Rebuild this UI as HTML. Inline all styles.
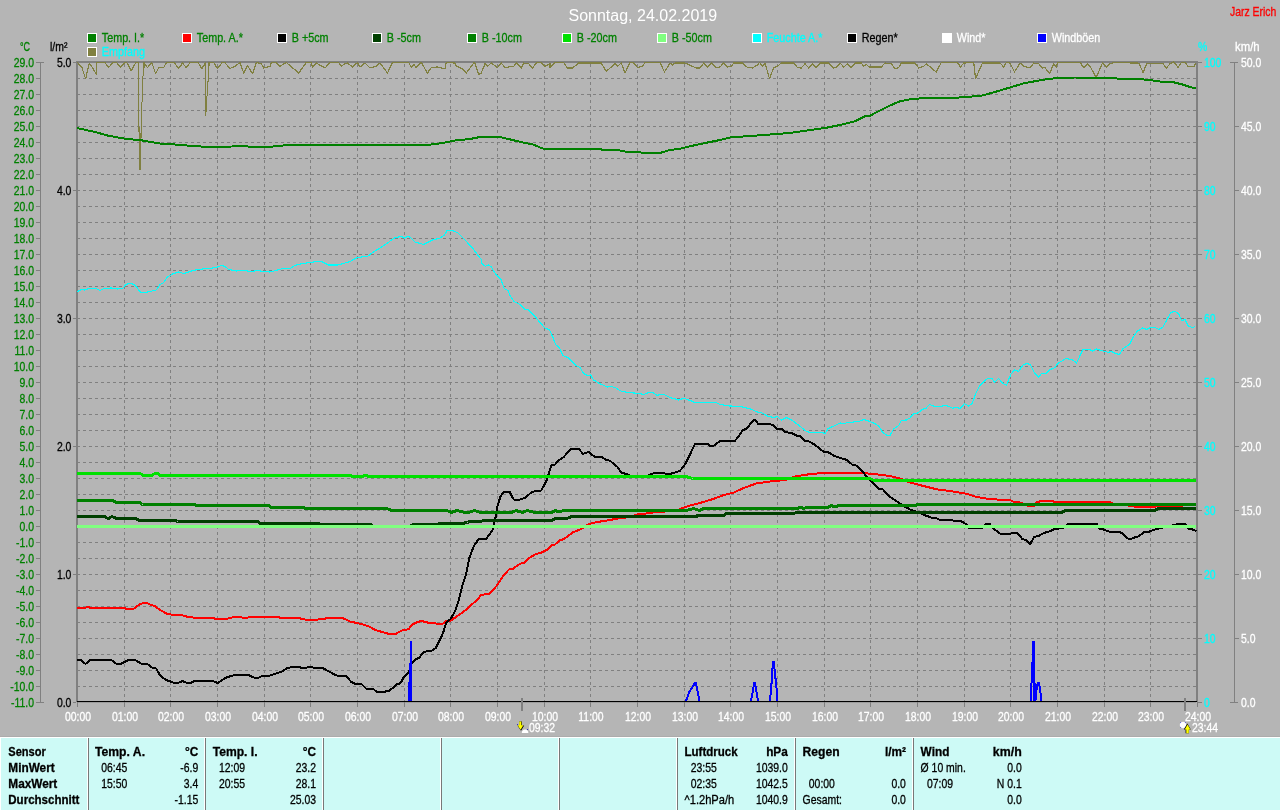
<!DOCTYPE html>
<html><head><meta charset="utf-8"><title>Wetter</title>
<style>html,body{margin:0;padding:0;background:#b5b5b5;overflow:hidden}svg{display:block;will-change:transform}text{font-family:"Liberation Sans",sans-serif}</style>
</head><body>
<svg width="1280" height="810" viewBox="0 0 1280 810">
<rect width="1280" height="810" fill="#b5b5b5"/>
<g stroke="#808080" stroke-width="1" stroke-dasharray="3 3" shape-rendering="crispEdges" fill="none">
<path d="M77 78.5H1196"/>
<path d="M77 94.5H1196"/>
<path d="M77 110.5H1196"/>
<path d="M77 126.5H1196"/>
<path d="M77 142.5H1196"/>
<path d="M77 158.5H1196"/>
<path d="M77 174.5H1196"/>
<path d="M77 190.5H1196"/>
<path d="M77 206.5H1196"/>
<path d="M77 222.5H1196"/>
<path d="M77 238.5H1196"/>
<path d="M77 254.5H1196"/>
<path d="M77 270.5H1196"/>
<path d="M77 286.5H1196"/>
<path d="M77 302.5H1196"/>
<path d="M77 318.5H1196"/>
<path d="M77 334.5H1196"/>
<path d="M77 350.5H1196"/>
<path d="M77 366.5H1196"/>
<path d="M77 382.5H1196"/>
<path d="M77 398.5H1196"/>
<path d="M77 414.5H1196"/>
<path d="M77 430.5H1196"/>
<path d="M77 446.5H1196"/>
<path d="M77 462.5H1196"/>
<path d="M77 478.5H1196"/>
<path d="M77 494.5H1196"/>
<path d="M77 510.5H1196"/>
<path d="M77 526.5H1196"/>
<path d="M77 542.5H1196"/>
<path d="M77 558.5H1196"/>
<path d="M77 574.5H1196"/>
<path d="M77 590.5H1196"/>
<path d="M77 606.5H1196"/>
<path d="M77 622.5H1196"/>
<path d="M77 638.5H1196"/>
<path d="M77 654.5H1196"/>
<path d="M77 670.5H1196"/>
<path d="M77 686.5H1196"/>
<path d="M124.5 703V63"/>
<path d="M170.5 703V63"/>
<path d="M217.5 703V63"/>
<path d="M264.5 703V63"/>
<path d="M310.5 703V63"/>
<path d="M357.5 703V63"/>
<path d="M404.5 703V63"/>
<path d="M450.5 703V63"/>
<path d="M497.5 703V63"/>
<path d="M544.5 703V63"/>
<path d="M590.5 703V63"/>
<path d="M637.5 703V63"/>
<path d="M684.5 703V63"/>
<path d="M730.5 703V63"/>
<path d="M777.5 703V63"/>
<path d="M824.5 703V63"/>
<path d="M870.5 703V63"/>
<path d="M917.5 703V63"/>
<path d="M964.5 703V63"/>
<path d="M1010.5 703V63"/>
<path d="M1057.5 703V63"/>
<path d="M1104.5 703V63"/>
<path d="M1150.5 703V63"/>
</g>
<g fill="#808080" shape-rendering="crispEdges">
<rect x="76" y="61" width="1122" height="2"/>
<rect x="76" y="61" width="2" height="641"/>
<rect x="1196" y="61" width="2" height="641"/>
</g>
<path d="M77.5 62.5L81.88 67.5L85.62 78.75L89.38 63.12L93.12 68.75L96.25 74.38L96.62 62.75L105 62.75L108.75 67.5L112.5 62.75L116.88 62.75L120.62 67.5L124.38 62.75L126.88 62.75L131.25 70.62L135.62 62.75L138.12 62.75L138.5 116.25L139.5 142.5L140 170L140.75 142.5L141.25 128.75L141.5 103.12L142.5 102.5L142.75 76.25L143.75 75.62L144 62.75L147.5 67.5L151.88 62.75L155.62 73.75L158.75 67.5L163.75 67.5L166.25 62.75L174.38 62.75L178.75 68.5L182.5 63.12L186.25 67.5L190 62.75L198.12 62.75L201.88 68.5L205.62 62.75L205.62 115.62L206.25 108.75L206.5 96.25L207.5 95.62L207.75 81.88L208.5 81.25L209 62.75L213.75 62.75L217.5 68.5L221.88 62.75L225 62.75L230 68.5L235 66.25L240 62.5L243.75 73L247.5 65.5L252.5 73.75L256.25 62.5L261.25 63.75L263.75 68L270 66.25L271.25 62.5L276.25 62.5L280 66.25L283.75 63.75L286.25 62.5L298.75 73L306.25 62.5L311.25 62.5L312.5 67L316.25 63L325 68L330 62.5L338.75 62.5L341.25 66.25L345 63.75L347.5 63L352.5 67L357.5 62.5L360 67L365 63L370 68L376.25 66.25L380 63L387.5 73L392.5 62.5L408.75 62.5L411.25 67.5L413.75 64.5L416.25 67.5L421.25 62.5L427.5 73L431.25 67.5L437.5 67L445 68.75L446.25 62.5L455 63L456.25 66.25L462.5 68.75L466.25 73L473.75 63L475 63L478.75 74.5L481.25 73L485 63.75L487.5 66.25L491.25 63L497.5 67.5L501.25 63L505 67.5L513.75 66.25L516.25 63L521.25 68L523.75 63L528.75 63.75L532.5 68L536.25 63L541.25 62.5L545 66.25L550 63.75L550 67.5L555 62.5L563.75 62.5L567.5 68L572.5 68L578.75 63L601.25 63L606.25 71.25L615 63.75L617.5 66.25L621.25 63L625 73L630 62.5L633.75 63L637.5 67.5L642.5 66.25L645 62.5L660 62.5L664.5 72L670 63L672.5 65L675 63L685 63L696.25 68L700 68L703.75 63L707.5 67L711.25 63L716.25 67.5L720 67L723.75 63L727.5 67L731.25 66.25L733.75 63L742.5 63L747.5 67.5L752.5 68L757.5 65L759.5 62.5L762.5 66.25L765 63L769.5 78.75L773.75 67.5L777.5 66.25L781.25 63L793.75 63L797.5 67.5L801.25 68L805 63.75L808.75 68L812.5 63.75L816.25 67.5L820 63L828.75 63L833.75 68L836.25 67.5L840 63L843.75 67L847.5 63.75L851.25 67.5L855 63L861.25 63L863.75 66.25L866.25 64.5L870 67.5L870 67L881.25 67L885 63L891.25 63.75L895 68.75L898.75 67.5L901.25 63L915 63L918.75 68L923.75 66.25L926.25 63.75L936.25 72L941.25 62.5L957.5 62.5L960.5 67L963.75 63L973.75 62.5L975.5 78.75L982.5 63L1000 63L1003.75 67L1006.25 62.5L1010 63L1014.5 72L1020 63L1023.75 66.25L1030 68L1033.75 63L1038.75 63.75L1042.5 68L1045 67.5L1049.5 73.75L1053.75 63.75L1056.25 67L1057.5 62.5L1080 62.5L1083.75 67.5L1087.5 63.75L1090 66.25L1096.25 77.5L1102.5 63L1106.25 67L1110 63.75L1113.75 62.5L1138.75 63.12L1143.12 72.5L1146.88 63.12L1162.5 63.12L1166.25 68.12L1170 63.75L1173.75 61.88L1178.12 67.5L1181.25 62.5L1185.62 62.5L1188.12 66.88L1193.75 66.88L1196.25 62.5" fill="none" stroke="#808040" stroke-width="1.2" stroke-linejoin="round" shape-rendering="crispEdges"/>
<path d="M77 128L95 132L107.5 135.5L125 138.75L142.5 140.5L160 143.5L175 144.5L190 145.75L205 146.75L225 146.75L245 146L250 146.75L271 146.75L287.5 145L427.5 145L442.5 143L455 140.5L470 139L480 137L500 137L512.5 140L525 143L532.5 144.25L542.5 148.5L550 149L567.5 149.5L570 148.75L600 148.75L602.5 150L617.5 150L625 151.5L640 152L642.5 153L660 153L670 150L680 148.75L690 146.25L705 143L720 140L730 137.5L750 136L770 134.5L790 133L810 130L825 128L840 125L855 121.25L865 116.25L870 115.75L880 110.5L890 105.5L900 101.25L910 99.25L922.5 98.25L952.5 98L970 96.75L982.5 95.5L995 92L1010 87.5L1025 83L1035 81.25L1045 79.5L1057.5 78L1075 77.5L1110 78L1120 78.75L1137.5 79L1150 80L1160 81.5L1172.5 82L1182.5 84.5L1190 87L1196 88.5" fill="none" stroke="#008000" stroke-width="2" stroke-linejoin="round" shape-rendering="crispEdges"/>
<path d="M77 292L81.25 289.5L85 290L88.75 288.5L96.25 288.5L100 290.5L103.75 288.75L111.25 288L117.5 289L123.25 288L125.5 284.5L130 283.25L133.75 284.25L137 287.5L139.5 291.5L143 293L150 291.5L156.25 290L160 284.5L163.75 282.5L167.5 277L172.5 274L178.75 272L183.75 273.5L187.5 272.5L192.5 270.5L202.5 269L212.5 268L216.25 267.5L221.25 265.5L225 266.5L228.75 269.5L236.25 271L245 270.5L251.25 271.75L256.25 270.5L262.5 271.25L270 272L276.25 270.5L282.5 268.5L290 268.5L295 265.5L302.5 263.5L310 262.5L316.25 261.5L321.25 261.5L328.75 265L337.5 265L345 263L350 261.5L356.25 258L361.25 257L367.5 256.5L372.5 252.5L380 248L387.5 243L395 237.5L401.25 236.5L404.5 238L408 236L410.5 237.5L415 242L423.75 244.5L432.5 240L440 238L444.5 235L447 230.5L452.5 230.5L458 233L465 240L472.5 248L478.75 256.25L481.25 259.5L482 263.75L485.5 266.25L488.75 265L491.25 267L496.25 275L501.25 280L504.25 288.75L508 290.5L510 295.5L513.75 301.25L520 304.5L525 309.5L528 309.5L533.75 315L540 322.5L545 328L549.5 330L552.5 336.25L555.5 344.5L559.5 348L563 355.5L568.75 358L576.25 365.5L580 367.5L583.75 373.75L587.5 375.5L590.5 375L593.75 380L600 383.75L607.5 387L610 386.25L615 387.5L621.25 391.25L627.5 392.5L637.5 393.25L643.75 394.5L648.75 392.5L653 392.5L657 395.5L659.5 394.5L663.75 394.5L670 397.5L678.75 400L683.75 398.25L688.75 400L695 402.5L716.25 402.5L720 404.5L730 406L740 406.5L750 408.75L757.5 412L761.25 412.5L767.5 416L773.75 417.5L777.5 416.5L781.25 420L786.25 417.5L792.5 420.5L800 426.25L806.25 431.25L810 432.5L822.5 432.5L825 433.5L828 428.75L835 425.5L840 423L843.75 423.75L847.5 422.5L852.5 422.5L855 421.25L858.75 421.5L863.75 419.5L868.75 421L875 423.75L878.75 426.25L882.5 432L886.25 435L890 435.5L893.75 428.75L898.75 425.5L901.25 420.5L906.25 420L910 418L913.75 413.5L917.5 413L922.5 409.5L926.25 408L929.5 404.5L933.75 406L940 407L943.75 405.5L948.75 406.25L952.5 408.25L956.25 407.5L960 408.5L964.5 403.60L968.60 406.10L972.10 403.5L975.90 393.10L979.70 385.60L984.40 380.90L988.10 378.10L991.90 378.5L994.70 382.25L998.40 378.5L1003.10 383.40L1006.5 385.25L1010.60 374.75L1014.40 369.70L1018.5 371.60L1022.80 365L1026.60 363.5L1030.30 364.60L1034.10 372.10L1038.40 377.40L1041.60 373.40L1045.90 373.40L1050 369.70L1054.70 367.80L1058.40 362.75L1062.20 360.90L1065.90 358.40L1070.60 359.40L1073.40 360.30L1076.60 363.10L1082.80 349.60L1089.40 349.60L1092.75 351.10L1096.5 348.90L1100.60 350.40L1108.10 352.25L1111.5 351.5L1115.60 353.40L1119.40 354.5L1123.10 348.5L1129.70 344.40L1133.40 336.90L1137.20 331.25L1142.80 327.90L1146.60 329.40L1150.30 327.5L1155 327.5L1158.75 329.40L1162.90 327.10L1166.25 320.90L1170.90 312.5L1174.70 311.40L1178.40 313.40L1181.60 320.40L1185 319.60L1188.40 326L1192.5 327.5L1195.30 326.60" fill="none" stroke="#00ffff" stroke-width="1.15" stroke-linejoin="round" shape-rendering="crispEdges"/>
<path d="M77 608L85 608L87.5 607L91.25 608L123.75 608L126.25 608.75L133.75 608.75L140 604L146.25 602.5L150 604.5L155 606.25L160 610L167.5 614L175 615L181.25 615L187.5 616.75L195 617.75L212.5 617.75L215 618.75L227.5 618.75L233.75 617L240 617L242.5 617.75L247.5 617.75L250 616.75L277.5 616.75L280 617.75L298.75 617.75L301.25 618.75L306.25 619.75L317.5 619.75L320 618.75L325 618.75L327.5 617.75L341.25 617.75L345 619L350 621.5L360 623.75L368.75 626.25L375.90 630.30L383.30 632.20L388.5 633.85L395.90 633.85L401.10 630.75L408.5 629.25L412.20 624.80L417.40 621.85L421.85 621.10L427.80 622.60L434.40 622.90L436.70 623.80L442.60 623.80L446.30 621.10L450.70 620.80L457.40 615.90L464.80 610.75L472.20 604.10L477.40 599.60L481.40 594.75L489.25 594L496.25 586.25L503.75 575L509.5 569L512.5 569L520 563.75L523.75 563L530 557.5L536.25 553.75L540 553.25L547.5 549.5L552.5 544.5L555 544.5L560 540L563.75 539.25L572.5 532.5L580 529.5L583.75 527.5L588.75 524L597.5 522L610 520L620 518L626.25 517.5L637.5 514.5L650 513L656.25 512L676 510.90L682.5 508L690 505.5L700 503L712.5 499.25L722.5 495.5L733.75 492.5L743.75 488L756.25 483.5L770 481.5L785 480L795 476.5L807.5 474.5L822.5 473L842.5 472.75L862.5 473L877.5 474.5L890 476L900 478.5L910 482.5L922.5 485.75L937.5 489.5L950 491L961.25 492.80L967.5 494.10L975.90 496.75L988.10 498.80L999.40 499.75L1009.70 500.10L1013.40 501.60L1021.90 502.75L1027.5 505.90L1034 505.90L1036.90 502.20L1040.60 501.25L1052.80 501.25L1055.60 502.40L1110.90 502.40L1114 504L1131.60 505.90L1135.30 506.90L1155 506.90L1156.90 506.10L1181.25 506.10L1184 504.5L1196 504.5" fill="none" stroke="#ff0000" stroke-width="2" stroke-linejoin="round" shape-rendering="crispEdges"/>
<path d="M77 660.25L81.25 660.25L85.5 664L90 660L111.25 660L116.25 663.75L121.25 663.75L128.75 660L135 660L141.25 663.5L147.5 664L152.5 668L156.25 668.5L160 675.5L166.25 680L173.75 682.75L178.75 682.75L182.5 681L186.25 682.75L191.25 682.75L195 680.75L212.5 680.75L217.5 683L226.25 677.5L233.75 675.25L248.75 675.25L255 678L258.75 677.5L262.5 676L270 675.5L282.5 671.25L287 668L293.75 666.75L298.75 666.75L301.25 667.75L306.25 667.75L310 666.75L315 668L322.5 668L330 672L336.25 675.5L346.25 676L351.25 682L355 683.75L361.25 683.75L366.25 688.75L373 688.80L376.70 691.80L384.10 691.80L389.25 690.75L393 687.80L396.70 684.10L400.40 683.30L404.10 676.70L409.25 671.5L411.5 664.10L415.20 659.60L419.60 657.40L423.60 651.90L427.80 651.30L432.20 650.40L435.90 647.80L440.40 638.90L443.30 632.20L446.30 622.60L447.80 621.10L450.70 618.90L455.20 610.75L458.90 599.60L462.5 585L466.25 573.75L469.5 557.5L473.75 546.25L478.75 539L486.25 539L492.5 530L495.5 517.5L497.5 506.25L500.5 496.25L503.75 491.75L509.5 491.75L513.75 499.5L520 499.5L525 498L531.25 492.5L535 491.25L541.25 490.5L546.25 481.25L548.75 473.75L551.25 465.5L555 464.5L558.75 460.5L563.75 457L567.5 452.5L571.25 449L578.75 449L583 453.75L588.75 452L594.5 456.75L601.25 456.75L606.25 460L610 460.75L617.5 467L621.25 472.5L627.5 474.5L631 476.5L647 476.5L650 474.5L655 473L663.75 473L667.5 474.5L673.75 473L680 470.75L685 464.5L690 454.5L695 443.75L707.5 443.75L710 445.75L713.75 445.75L719.5 441.25L734.5 441.25L738.75 436.25L742.5 430.5L746.25 428.75L751.25 423L753.75 420L755.5 420L758 423.75L770 424L773.75 425.5L777 429.5L781.25 428.5L785 432L791.25 433L796.25 435.5L800 436L804.5 440.5L810 441.75L815 445L823.75 451.75L828 452L833.75 455.75L841.25 458.25L847 460L852 464.5L856.25 465.5L861.25 470L866.25 476.25L872.5 482.5L878.75 488.75L883 489.5L887.5 495L893.75 499.25L901.25 504.5L910 509.5L918.75 512.5L926.25 515.75L931.25 517.5L936.25 518.25L940 520L951.25 520L955 521L960 521L962.80 521.90L966.60 524.70L969.40 528L981.60 528L985.30 524.30L990 524.30L993.75 529L1000.30 533.70L1010.60 533.70L1013.40 532.75L1016.25 532.75L1019.10 534.60L1021.90 538.75L1026 540.25L1030.30 544L1034.10 536.90L1038.75 535.90L1041.60 534.10L1046.25 532.20L1050 531.25L1054.70 529L1063.10 528L1067.80 524.30L1071.60 523.75L1096.90 523.75L1099.70 528.60L1103.40 529.40L1109.10 531.60L1119.40 531.60L1123.10 534.10L1127.80 538.40L1130.60 539.10L1133.40 537.80L1138.10 536.5L1144.70 531.80L1149.40 531.60L1155 529.40L1160.60 528L1175.60 524.70L1179.40 523.75L1185 523.75L1187.80 528.40L1192.5 529.40L1196.25 531.25" fill="none" stroke="#000000" stroke-width="2" stroke-linejoin="round" shape-rendering="crispEdges"/>
<path d="M77 516.5L105 516.5L108 518.75L112 516.5L116.25 518.5L136.25 518.5L138.75 520.5L176.25 520.5L177.5 521.5L257.5 521.5L260 523.5L318.75 523.5L320 524.5L371 524.5L373 526.5L410 526.5L413 524.30L460 523.75L467.5 522.5L470 521.25L495 520.75L497.5 520L552.5 520L555 518.75L567.5 518.25L571.25 516.75L696.25 516.75L697.5 515.5L723.75 515.5L726.25 513.5L793.75 513.5L796.25 512.5L1062.20 512.30L1065 510.40L1155 510.40L1157.80 508.75L1196 508.75" fill="none" stroke="#004000" stroke-width="3" stroke-linejoin="round" shape-rendering="crispEdges"/>
<path d="M77 500.5L112.5 500.5L116.25 502.5L140 502.5L142.5 504.5L195 504.5L196.25 505.5L268.75 505.5L271.25 507.5L303.75 507.5L306.25 508.75L387.5 508.75L392 510.5L447 510.5L451.25 512.5L457 510.5L462.5 512L470 512L474.5 510.5L478.75 512L512.5 512L516.25 510.5L520.5 512L523.75 512L527 510.5L532.5 512L552.5 512L555.75 510.5L558.75 512L563.75 510.5L686.25 510.5L693.75 508.5L699.5 510.5L703.75 508.5L797.5 508.5L800 507L803.75 508.5L807.5 507L828.75 507L831.25 505.5L835 507L838.75 505.5L915 505.5L917.5 504.5L1196 504.5" fill="none" stroke="#008000" stroke-width="3" stroke-linejoin="round" shape-rendering="crispEdges"/>
<path d="M77 473.5L140 473.5L143.75 475.5L151.25 475.5L155 473.5L157.5 473.5L160 475.5L350 475.5L353.75 476.75L361.25 476.75L365 475.5L370 476.5L686 476.60L692.5 478.5L870 478.5L873.75 480.40L1196 480.40" fill="none" stroke="#00e000" stroke-width="3" stroke-linejoin="round" shape-rendering="crispEdges"/>
<path d="M77 526.5L1196 526.5" fill="none" stroke="#80ff80" stroke-width="3" stroke-linejoin="round" shape-rendering="crispEdges"/>
<path d="M408 701V682H409V662.5H410V641H412V701Z" fill="#0000ff" shape-rendering="crispEdges"/>
<path d="M686 701L689 692.5L695 683L696 683L699.5 701" fill="none" stroke="#0000ff" stroke-width="2" stroke-linejoin="miter" shape-rendering="crispEdges"/>
<path d="M751 701L754.30 683L755 683L758 701" fill="none" stroke="#0000ff" stroke-width="2" stroke-linejoin="miter" shape-rendering="crispEdges"/>
<path d="M770.30 701L770.60 692.5L771.60 682.5L772.20 672.5L773 661.5L774 661.5L774.80 672.5L776 682.5L777 692.5L777.30 701" fill="none" stroke="#0000ff" stroke-width="2" stroke-linejoin="miter" shape-rendering="crispEdges"/>
<path d="M1032.3 641H1034.9V682.5H1035.8V701H1033.2V683H1031.9V701H1030.2V682.5H1031.1V662H1032.3Z" fill="#0000ff" shape-rendering="crispEdges"/>
<path d="M1035.40 701L1036.20 691L1037.80 683.20L1039 683.20L1040.30 690.5L1041.20 701" fill="none" stroke="#0000ff" stroke-width="2" stroke-linejoin="miter" shape-rendering="crispEdges"/>
<rect x="77" y="701" width="1120" height="1" fill="#000" shape-rendering="crispEdges"/>
<rect x="78" y="702" width="1118" height="1" fill="#9c9c9c" shape-rendering="crispEdges"/>
<g fill="#808080" shape-rendering="crispEdges">
<rect x="40" y="62" width="1" height="641"/>
<rect x="36" y="62" width="8" height="1"/>
<rect x="36" y="78" width="4" height="1"/>
<rect x="36" y="94" width="4" height="1"/>
<rect x="36" y="110" width="4" height="1"/>
<rect x="36" y="126" width="4" height="1"/>
<rect x="36" y="142" width="4" height="1"/>
<rect x="36" y="158" width="4" height="1"/>
<rect x="36" y="174" width="4" height="1"/>
<rect x="36" y="190" width="4" height="1"/>
<rect x="36" y="206" width="4" height="1"/>
<rect x="36" y="222" width="4" height="1"/>
<rect x="36" y="238" width="4" height="1"/>
<rect x="36" y="254" width="4" height="1"/>
<rect x="36" y="270" width="4" height="1"/>
<rect x="36" y="286" width="4" height="1"/>
<rect x="36" y="302" width="4" height="1"/>
<rect x="36" y="318" width="4" height="1"/>
<rect x="36" y="334" width="4" height="1"/>
<rect x="36" y="350" width="4" height="1"/>
<rect x="36" y="366" width="4" height="1"/>
<rect x="36" y="382" width="4" height="1"/>
<rect x="36" y="398" width="4" height="1"/>
<rect x="36" y="414" width="4" height="1"/>
<rect x="36" y="430" width="4" height="1"/>
<rect x="36" y="446" width="4" height="1"/>
<rect x="36" y="462" width="4" height="1"/>
<rect x="36" y="478" width="4" height="1"/>
<rect x="36" y="494" width="4" height="1"/>
<rect x="36" y="510" width="4" height="1"/>
<rect x="36" y="526" width="4" height="1"/>
<rect x="36" y="542" width="4" height="1"/>
<rect x="36" y="558" width="4" height="1"/>
<rect x="36" y="574" width="4" height="1"/>
<rect x="36" y="590" width="4" height="1"/>
<rect x="36" y="606" width="4" height="1"/>
<rect x="36" y="622" width="4" height="1"/>
<rect x="36" y="638" width="4" height="1"/>
<rect x="36" y="654" width="4" height="1"/>
<rect x="36" y="670" width="4" height="1"/>
<rect x="36" y="686" width="4" height="1"/>
<rect x="36" y="702" width="8" height="1"/>
<rect x="73" y="62" width="3" height="1"/>
<rect x="1198" y="62" width="4" height="1"/>
<rect x="73" y="190" width="3" height="1"/>
<rect x="1198" y="190" width="4" height="1"/>
<rect x="73" y="318" width="3" height="1"/>
<rect x="1198" y="318" width="4" height="1"/>
<rect x="73" y="446" width="3" height="1"/>
<rect x="1198" y="446" width="4" height="1"/>
<rect x="73" y="574" width="3" height="1"/>
<rect x="1198" y="574" width="4" height="1"/>
<rect x="73" y="702" width="3" height="1"/>
<rect x="1198" y="702" width="4" height="1"/>
<rect x="1198" y="62" width="4" height="1"/>
<rect x="1198" y="126" width="4" height="1"/>
<rect x="1198" y="190" width="4" height="1"/>
<rect x="1198" y="254" width="4" height="1"/>
<rect x="1198" y="318" width="4" height="1"/>
<rect x="1198" y="382" width="4" height="1"/>
<rect x="1198" y="446" width="4" height="1"/>
<rect x="1198" y="510" width="4" height="1"/>
<rect x="1198" y="574" width="4" height="1"/>
<rect x="1198" y="638" width="4" height="1"/>
<rect x="1198" y="702" width="4" height="1"/>
<rect x="1234" y="62" width="1" height="641"/>
<rect x="1230" y="62" width="8" height="1"/>
<rect x="1235" y="126" width="4" height="1"/>
<rect x="1235" y="190" width="4" height="1"/>
<rect x="1235" y="254" width="4" height="1"/>
<rect x="1235" y="318" width="4" height="1"/>
<rect x="1235" y="382" width="4" height="1"/>
<rect x="1235" y="446" width="4" height="1"/>
<rect x="1235" y="510" width="4" height="1"/>
<rect x="1235" y="574" width="4" height="1"/>
<rect x="1235" y="638" width="4" height="1"/>
<rect x="1230" y="702" width="8" height="1"/>
<rect x="77" y="702" width="1" height="5"/>
<rect x="124" y="702" width="1" height="5"/>
<rect x="170" y="702" width="1" height="5"/>
<rect x="217" y="702" width="1" height="5"/>
<rect x="264" y="702" width="1" height="5"/>
<rect x="310" y="702" width="1" height="5"/>
<rect x="357" y="702" width="1" height="5"/>
<rect x="404" y="702" width="1" height="5"/>
<rect x="450" y="702" width="1" height="5"/>
<rect x="497" y="702" width="1" height="5"/>
<rect x="544" y="702" width="1" height="5"/>
<rect x="590" y="702" width="1" height="5"/>
<rect x="637" y="702" width="1" height="5"/>
<rect x="684" y="702" width="1" height="5"/>
<rect x="730" y="702" width="1" height="5"/>
<rect x="777" y="702" width="1" height="5"/>
<rect x="824" y="702" width="1" height="5"/>
<rect x="870" y="702" width="1" height="5"/>
<rect x="917" y="702" width="1" height="5"/>
<rect x="964" y="702" width="1" height="5"/>
<rect x="1010" y="702" width="1" height="5"/>
<rect x="1057" y="702" width="1" height="5"/>
<rect x="1104" y="702" width="1" height="5"/>
<rect x="1150" y="702" width="1" height="5"/>
<rect x="1197" y="702" width="1" height="5"/>
</g>
<text transform="translate(34,66.5) scale(0.835,1)" text-anchor="end" fill="#008000" stroke="#008000" stroke-width="0.3" font-size="12.5">29.0</text>
<text transform="translate(34,82.5) scale(0.835,1)" text-anchor="end" fill="#008000" stroke="#008000" stroke-width="0.3" font-size="12.5">28.0</text>
<text transform="translate(34,98.5) scale(0.835,1)" text-anchor="end" fill="#008000" stroke="#008000" stroke-width="0.3" font-size="12.5">27.0</text>
<text transform="translate(34,114.5) scale(0.835,1)" text-anchor="end" fill="#008000" stroke="#008000" stroke-width="0.3" font-size="12.5">26.0</text>
<text transform="translate(34,130.5) scale(0.835,1)" text-anchor="end" fill="#008000" stroke="#008000" stroke-width="0.3" font-size="12.5">25.0</text>
<text transform="translate(34,146.5) scale(0.835,1)" text-anchor="end" fill="#008000" stroke="#008000" stroke-width="0.3" font-size="12.5">24.0</text>
<text transform="translate(34,162.5) scale(0.835,1)" text-anchor="end" fill="#008000" stroke="#008000" stroke-width="0.3" font-size="12.5">23.0</text>
<text transform="translate(34,178.5) scale(0.835,1)" text-anchor="end" fill="#008000" stroke="#008000" stroke-width="0.3" font-size="12.5">22.0</text>
<text transform="translate(34,194.5) scale(0.835,1)" text-anchor="end" fill="#008000" stroke="#008000" stroke-width="0.3" font-size="12.5">21.0</text>
<text transform="translate(34,210.5) scale(0.835,1)" text-anchor="end" fill="#008000" stroke="#008000" stroke-width="0.3" font-size="12.5">20.0</text>
<text transform="translate(34,226.5) scale(0.835,1)" text-anchor="end" fill="#008000" stroke="#008000" stroke-width="0.3" font-size="12.5">19.0</text>
<text transform="translate(34,242.5) scale(0.835,1)" text-anchor="end" fill="#008000" stroke="#008000" stroke-width="0.3" font-size="12.5">18.0</text>
<text transform="translate(34,258.5) scale(0.835,1)" text-anchor="end" fill="#008000" stroke="#008000" stroke-width="0.3" font-size="12.5">17.0</text>
<text transform="translate(34,274.5) scale(0.835,1)" text-anchor="end" fill="#008000" stroke="#008000" stroke-width="0.3" font-size="12.5">16.0</text>
<text transform="translate(34,290.5) scale(0.835,1)" text-anchor="end" fill="#008000" stroke="#008000" stroke-width="0.3" font-size="12.5">15.0</text>
<text transform="translate(34,306.5) scale(0.835,1)" text-anchor="end" fill="#008000" stroke="#008000" stroke-width="0.3" font-size="12.5">14.0</text>
<text transform="translate(34,322.5) scale(0.835,1)" text-anchor="end" fill="#008000" stroke="#008000" stroke-width="0.3" font-size="12.5">13.0</text>
<text transform="translate(34,338.5) scale(0.835,1)" text-anchor="end" fill="#008000" stroke="#008000" stroke-width="0.3" font-size="12.5">12.0</text>
<text transform="translate(34,354.5) scale(0.835,1)" text-anchor="end" fill="#008000" stroke="#008000" stroke-width="0.3" font-size="12.5">11.0</text>
<text transform="translate(34,370.5) scale(0.835,1)" text-anchor="end" fill="#008000" stroke="#008000" stroke-width="0.3" font-size="12.5">10.0</text>
<text transform="translate(34,386.5) scale(0.835,1)" text-anchor="end" fill="#008000" stroke="#008000" stroke-width="0.3" font-size="12.5">9.0</text>
<text transform="translate(34,402.5) scale(0.835,1)" text-anchor="end" fill="#008000" stroke="#008000" stroke-width="0.3" font-size="12.5">8.0</text>
<text transform="translate(34,418.5) scale(0.835,1)" text-anchor="end" fill="#008000" stroke="#008000" stroke-width="0.3" font-size="12.5">7.0</text>
<text transform="translate(34,434.5) scale(0.835,1)" text-anchor="end" fill="#008000" stroke="#008000" stroke-width="0.3" font-size="12.5">6.0</text>
<text transform="translate(34,450.5) scale(0.835,1)" text-anchor="end" fill="#008000" stroke="#008000" stroke-width="0.3" font-size="12.5">5.0</text>
<text transform="translate(34,466.5) scale(0.835,1)" text-anchor="end" fill="#008000" stroke="#008000" stroke-width="0.3" font-size="12.5">4.0</text>
<text transform="translate(34,482.5) scale(0.835,1)" text-anchor="end" fill="#008000" stroke="#008000" stroke-width="0.3" font-size="12.5">3.0</text>
<text transform="translate(34,498.5) scale(0.835,1)" text-anchor="end" fill="#008000" stroke="#008000" stroke-width="0.3" font-size="12.5">2.0</text>
<text transform="translate(34,514.5) scale(0.835,1)" text-anchor="end" fill="#008000" stroke="#008000" stroke-width="0.3" font-size="12.5">1.0</text>
<text transform="translate(34,530.5) scale(0.835,1)" text-anchor="end" fill="#008000" stroke="#008000" stroke-width="0.3" font-size="12.5">0.0</text>
<text transform="translate(34,546.5) scale(0.835,1)" text-anchor="end" fill="#008000" stroke="#008000" stroke-width="0.3" font-size="12.5">-1.0</text>
<text transform="translate(34,562.5) scale(0.835,1)" text-anchor="end" fill="#008000" stroke="#008000" stroke-width="0.3" font-size="12.5">-2.0</text>
<text transform="translate(34,578.5) scale(0.835,1)" text-anchor="end" fill="#008000" stroke="#008000" stroke-width="0.3" font-size="12.5">-3.0</text>
<text transform="translate(34,594.5) scale(0.835,1)" text-anchor="end" fill="#008000" stroke="#008000" stroke-width="0.3" font-size="12.5">-4.0</text>
<text transform="translate(34,610.5) scale(0.835,1)" text-anchor="end" fill="#008000" stroke="#008000" stroke-width="0.3" font-size="12.5">-5.0</text>
<text transform="translate(34,626.5) scale(0.835,1)" text-anchor="end" fill="#008000" stroke="#008000" stroke-width="0.3" font-size="12.5">-6.0</text>
<text transform="translate(34,642.5) scale(0.835,1)" text-anchor="end" fill="#008000" stroke="#008000" stroke-width="0.3" font-size="12.5">-7.0</text>
<text transform="translate(34,658.5) scale(0.835,1)" text-anchor="end" fill="#008000" stroke="#008000" stroke-width="0.3" font-size="12.5">-8.0</text>
<text transform="translate(34,674.5) scale(0.835,1)" text-anchor="end" fill="#008000" stroke="#008000" stroke-width="0.3" font-size="12.5">-9.0</text>
<text transform="translate(34,690.5) scale(0.835,1)" text-anchor="end" fill="#008000" stroke="#008000" stroke-width="0.3" font-size="12.5">-10.0</text>
<text transform="translate(34,706.5) scale(0.835,1)" text-anchor="end" fill="#008000" stroke="#008000" stroke-width="0.3" font-size="12.5">-11.0</text>
<text transform="translate(71.4,66.5) scale(0.835,1)" text-anchor="end" fill="#000" stroke="#000" stroke-width="0.3" font-size="12.5">5.0</text>
<text transform="translate(71.4,194.5) scale(0.835,1)" text-anchor="end" fill="#000" stroke="#000" stroke-width="0.3" font-size="12.5">4.0</text>
<text transform="translate(71.4,322.5) scale(0.835,1)" text-anchor="end" fill="#000" stroke="#000" stroke-width="0.3" font-size="12.5">3.0</text>
<text transform="translate(71.4,450.5) scale(0.835,1)" text-anchor="end" fill="#000" stroke="#000" stroke-width="0.3" font-size="12.5">2.0</text>
<text transform="translate(71.4,578.5) scale(0.835,1)" text-anchor="end" fill="#000" stroke="#000" stroke-width="0.3" font-size="12.5">1.0</text>
<text transform="translate(71.4,706.5) scale(0.835,1)" text-anchor="end" fill="#000" stroke="#000" stroke-width="0.3" font-size="12.5">0.0</text>
<text transform="translate(1204,66.5) scale(0.835,1)" text-anchor="start" fill="#00ffff" stroke="#00ffff" stroke-width="0.3" font-size="12.5">100</text>
<text transform="translate(1241,66.5) scale(0.835,1)" text-anchor="start" fill="#fff" stroke="#fff" stroke-width="0.3" font-size="12.5">50.0</text>
<text transform="translate(1204,130.5) scale(0.835,1)" text-anchor="start" fill="#00ffff" stroke="#00ffff" stroke-width="0.3" font-size="12.5">90</text>
<text transform="translate(1241,130.5) scale(0.835,1)" text-anchor="start" fill="#fff" stroke="#fff" stroke-width="0.3" font-size="12.5">45.0</text>
<text transform="translate(1204,194.5) scale(0.835,1)" text-anchor="start" fill="#00ffff" stroke="#00ffff" stroke-width="0.3" font-size="12.5">80</text>
<text transform="translate(1241,194.5) scale(0.835,1)" text-anchor="start" fill="#fff" stroke="#fff" stroke-width="0.3" font-size="12.5">40.0</text>
<text transform="translate(1204,258.5) scale(0.835,1)" text-anchor="start" fill="#00ffff" stroke="#00ffff" stroke-width="0.3" font-size="12.5">70</text>
<text transform="translate(1241,258.5) scale(0.835,1)" text-anchor="start" fill="#fff" stroke="#fff" stroke-width="0.3" font-size="12.5">35.0</text>
<text transform="translate(1204,322.5) scale(0.835,1)" text-anchor="start" fill="#00ffff" stroke="#00ffff" stroke-width="0.3" font-size="12.5">60</text>
<text transform="translate(1241,322.5) scale(0.835,1)" text-anchor="start" fill="#fff" stroke="#fff" stroke-width="0.3" font-size="12.5">30.0</text>
<text transform="translate(1204,386.5) scale(0.835,1)" text-anchor="start" fill="#00ffff" stroke="#00ffff" stroke-width="0.3" font-size="12.5">50</text>
<text transform="translate(1241,386.5) scale(0.835,1)" text-anchor="start" fill="#fff" stroke="#fff" stroke-width="0.3" font-size="12.5">25.0</text>
<text transform="translate(1204,450.5) scale(0.835,1)" text-anchor="start" fill="#00ffff" stroke="#00ffff" stroke-width="0.3" font-size="12.5">40</text>
<text transform="translate(1241,450.5) scale(0.835,1)" text-anchor="start" fill="#fff" stroke="#fff" stroke-width="0.3" font-size="12.5">20.0</text>
<text transform="translate(1204,514.5) scale(0.835,1)" text-anchor="start" fill="#00ffff" stroke="#00ffff" stroke-width="0.3" font-size="12.5">30</text>
<text transform="translate(1241,514.5) scale(0.835,1)" text-anchor="start" fill="#fff" stroke="#fff" stroke-width="0.3" font-size="12.5">15.0</text>
<text transform="translate(1204,578.5) scale(0.835,1)" text-anchor="start" fill="#00ffff" stroke="#00ffff" stroke-width="0.3" font-size="12.5">20</text>
<text transform="translate(1241,578.5) scale(0.835,1)" text-anchor="start" fill="#fff" stroke="#fff" stroke-width="0.3" font-size="12.5">10.0</text>
<text transform="translate(1204,642.5) scale(0.835,1)" text-anchor="start" fill="#00ffff" stroke="#00ffff" stroke-width="0.3" font-size="12.5">10</text>
<text transform="translate(1241,642.5) scale(0.835,1)" text-anchor="start" fill="#fff" stroke="#fff" stroke-width="0.3" font-size="12.5">5.0</text>
<text transform="translate(1204,706.5) scale(0.835,1)" text-anchor="start" fill="#00ffff" stroke="#00ffff" stroke-width="0.3" font-size="12.5">0</text>
<text transform="translate(1241,706.5) scale(0.835,1)" text-anchor="start" fill="#fff" stroke="#fff" stroke-width="0.3" font-size="12.5">0.0</text>
<text transform="translate(20,51) scale(0.72,1)" text-anchor="start" fill="#008000" stroke="#008000" stroke-width="0.3" font-size="12.5">°C</text>
<text transform="translate(50,51) scale(0.835,1)" text-anchor="start" fill="#000" stroke="#000" stroke-width="0.3" font-size="12.5">l/m²</text>
<text transform="translate(1198,51) scale(0.835,1)" text-anchor="start" fill="#00ffff" stroke="#00ffff" stroke-width="0.3" font-size="12.5">%</text>
<text transform="translate(1235,51) scale(0.91,1)" text-anchor="start" fill="#fff" stroke="#fff" stroke-width="0.3" font-size="12.5">km/h</text>
<text transform="translate(1230,16) scale(0.835,1)" text-anchor="start" fill="#ff0000" stroke="#ff0000" stroke-width="0.3" font-size="12.5">Jarz Erich</text>
<text transform="translate(568.5,21) scale(1,1)" text-anchor="start" fill="#fff" stroke="#fff" stroke-width="0" font-size="16">Sonntag, 24.02.2019</text>
<text transform="translate(78,721) scale(0.835,1)" text-anchor="middle" fill="#fff" stroke="#fff" stroke-width="0.3" font-size="12.5">00:00</text>
<text transform="translate(125,721) scale(0.835,1)" text-anchor="middle" fill="#fff" stroke="#fff" stroke-width="0.3" font-size="12.5">01:00</text>
<text transform="translate(171,721) scale(0.835,1)" text-anchor="middle" fill="#fff" stroke="#fff" stroke-width="0.3" font-size="12.5">02:00</text>
<text transform="translate(218,721) scale(0.835,1)" text-anchor="middle" fill="#fff" stroke="#fff" stroke-width="0.3" font-size="12.5">03:00</text>
<text transform="translate(265,721) scale(0.835,1)" text-anchor="middle" fill="#fff" stroke="#fff" stroke-width="0.3" font-size="12.5">04:00</text>
<text transform="translate(311,721) scale(0.835,1)" text-anchor="middle" fill="#fff" stroke="#fff" stroke-width="0.3" font-size="12.5">05:00</text>
<text transform="translate(358,721) scale(0.835,1)" text-anchor="middle" fill="#fff" stroke="#fff" stroke-width="0.3" font-size="12.5">06:00</text>
<text transform="translate(405,721) scale(0.835,1)" text-anchor="middle" fill="#fff" stroke="#fff" stroke-width="0.3" font-size="12.5">07:00</text>
<text transform="translate(451,721) scale(0.835,1)" text-anchor="middle" fill="#fff" stroke="#fff" stroke-width="0.3" font-size="12.5">08:00</text>
<text transform="translate(498,721) scale(0.835,1)" text-anchor="middle" fill="#fff" stroke="#fff" stroke-width="0.3" font-size="12.5">09:00</text>
<text transform="translate(545,721) scale(0.835,1)" text-anchor="middle" fill="#fff" stroke="#fff" stroke-width="0.3" font-size="12.5">10:00</text>
<text transform="translate(591,721) scale(0.835,1)" text-anchor="middle" fill="#fff" stroke="#fff" stroke-width="0.3" font-size="12.5">11:00</text>
<text transform="translate(638,721) scale(0.835,1)" text-anchor="middle" fill="#fff" stroke="#fff" stroke-width="0.3" font-size="12.5">12:00</text>
<text transform="translate(685,721) scale(0.835,1)" text-anchor="middle" fill="#fff" stroke="#fff" stroke-width="0.3" font-size="12.5">13:00</text>
<text transform="translate(731,721) scale(0.835,1)" text-anchor="middle" fill="#fff" stroke="#fff" stroke-width="0.3" font-size="12.5">14:00</text>
<text transform="translate(778,721) scale(0.835,1)" text-anchor="middle" fill="#fff" stroke="#fff" stroke-width="0.3" font-size="12.5">15:00</text>
<text transform="translate(825,721) scale(0.835,1)" text-anchor="middle" fill="#fff" stroke="#fff" stroke-width="0.3" font-size="12.5">16:00</text>
<text transform="translate(871,721) scale(0.835,1)" text-anchor="middle" fill="#fff" stroke="#fff" stroke-width="0.3" font-size="12.5">17:00</text>
<text transform="translate(918,721) scale(0.835,1)" text-anchor="middle" fill="#fff" stroke="#fff" stroke-width="0.3" font-size="12.5">18:00</text>
<text transform="translate(965,721) scale(0.835,1)" text-anchor="middle" fill="#fff" stroke="#fff" stroke-width="0.3" font-size="12.5">19:00</text>
<text transform="translate(1011,721) scale(0.835,1)" text-anchor="middle" fill="#fff" stroke="#fff" stroke-width="0.3" font-size="12.5">20:00</text>
<text transform="translate(1058,721) scale(0.835,1)" text-anchor="middle" fill="#fff" stroke="#fff" stroke-width="0.3" font-size="12.5">21:00</text>
<text transform="translate(1105,721) scale(0.835,1)" text-anchor="middle" fill="#fff" stroke="#fff" stroke-width="0.3" font-size="12.5">22:00</text>
<text transform="translate(1151,721) scale(0.835,1)" text-anchor="middle" fill="#fff" stroke="#fff" stroke-width="0.3" font-size="12.5">23:00</text>
<text transform="translate(1198,721) scale(0.835,1)" text-anchor="middle" fill="#fff" stroke="#fff" stroke-width="0.3" font-size="12.5">24:00</text>
<rect x="87" y="33" width="10" height="10" fill="#fff" shape-rendering="crispEdges"/>
<rect x="88" y="34" width="8" height="8" fill="#008000" shape-rendering="crispEdges"/>
<text transform="translate(101.8,42) scale(0.862,1)" text-anchor="start" fill="#008000" stroke="#008000" stroke-width="0.3" font-size="12.5">Temp. I.*</text>
<rect x="182" y="33" width="10" height="10" fill="#fff" shape-rendering="crispEdges"/>
<rect x="183" y="34" width="8" height="8" fill="#ff0000" shape-rendering="crispEdges"/>
<text transform="translate(196.8,42) scale(0.862,1)" text-anchor="start" fill="#008000" stroke="#008000" stroke-width="0.3" font-size="12.5">Temp. A.*</text>
<rect x="277" y="33" width="10" height="10" fill="#fff" shape-rendering="crispEdges"/>
<rect x="278" y="34" width="8" height="8" fill="#000000" shape-rendering="crispEdges"/>
<text transform="translate(291.8,42) scale(0.862,1)" text-anchor="start" fill="#008000" stroke="#008000" stroke-width="0.3" font-size="12.5">B +5cm</text>
<rect x="372" y="33" width="10" height="10" fill="#fff" shape-rendering="crispEdges"/>
<rect x="373" y="34" width="8" height="8" fill="#004000" shape-rendering="crispEdges"/>
<text transform="translate(386.8,42) scale(0.862,1)" text-anchor="start" fill="#008000" stroke="#008000" stroke-width="0.3" font-size="12.5">B -5cm</text>
<rect x="467" y="33" width="10" height="10" fill="#fff" shape-rendering="crispEdges"/>
<rect x="468" y="34" width="8" height="8" fill="#008000" shape-rendering="crispEdges"/>
<text transform="translate(481.8,42) scale(0.862,1)" text-anchor="start" fill="#008000" stroke="#008000" stroke-width="0.3" font-size="12.5">B -10cm</text>
<rect x="562" y="33" width="10" height="10" fill="#fff" shape-rendering="crispEdges"/>
<rect x="563" y="34" width="8" height="8" fill="#00e000" shape-rendering="crispEdges"/>
<text transform="translate(576.8,42) scale(0.862,1)" text-anchor="start" fill="#008000" stroke="#008000" stroke-width="0.3" font-size="12.5">B -20cm</text>
<rect x="657" y="33" width="10" height="10" fill="#fff" shape-rendering="crispEdges"/>
<rect x="658" y="34" width="8" height="8" fill="#80ff80" shape-rendering="crispEdges"/>
<text transform="translate(671.8,42) scale(0.862,1)" text-anchor="start" fill="#008000" stroke="#008000" stroke-width="0.3" font-size="12.5">B -50cm</text>
<rect x="752" y="33" width="10" height="10" fill="#fff" shape-rendering="crispEdges"/>
<rect x="753" y="34" width="8" height="8" fill="#00ffff" shape-rendering="crispEdges"/>
<text transform="translate(766.8,42) scale(0.862,1)" text-anchor="start" fill="#00ffff" stroke="#00ffff" stroke-width="0.3" font-size="12.5">Feuchte A.*</text>
<rect x="847" y="33" width="10" height="10" fill="#fff" shape-rendering="crispEdges"/>
<rect x="848" y="34" width="8" height="8" fill="#000000" shape-rendering="crispEdges"/>
<text transform="translate(861.8,42) scale(0.862,1)" text-anchor="start" fill="#000" stroke="#000" stroke-width="0.3" font-size="12.5">Regen*</text>
<rect x="942" y="33" width="10" height="10" fill="#fff" shape-rendering="crispEdges"/>
<rect x="943" y="34" width="8" height="8" fill="#ffffff" shape-rendering="crispEdges"/>
<text transform="translate(956.8,42) scale(0.862,1)" text-anchor="start" fill="#fff" stroke="#fff" stroke-width="0.3" font-size="12.5">Wind*</text>
<rect x="1037" y="33" width="10" height="10" fill="#fff" shape-rendering="crispEdges"/>
<rect x="1038" y="34" width="8" height="8" fill="#0000ff" shape-rendering="crispEdges"/>
<text transform="translate(1051.8,42) scale(0.862,1)" text-anchor="start" fill="#fff" stroke="#fff" stroke-width="0.3" font-size="12.5">Windböen</text>
<rect x="87" y="47" width="10" height="10" fill="#fff" shape-rendering="crispEdges"/>
<rect x="88" y="48" width="8" height="8" fill="#808040" shape-rendering="crispEdges"/>
<text transform="translate(101.8,56) scale(0.862,1)" text-anchor="start" fill="#00ffff" stroke="#00ffff" stroke-width="0.3" font-size="12.5">Empfang</text>
<g fill="#808080" shape-rendering="crispEdges">
<rect x="521" y="698" width="2" height="13"/>
<rect x="1184" y="698" width="2" height="13"/>
</g>
<text transform="translate(529,732) scale(0.835,1)" text-anchor="start" fill="#fff" stroke="#fff" stroke-width="0.3" font-size="12.5">09:32</text>
<text transform="translate(1192,732) scale(0.835,1)" text-anchor="start" fill="#fff" stroke="#fff" stroke-width="0.3" font-size="12.5">23:44</text>
<path d="M519.2 721.6H522V725.4H524.2L521 730.8L517.4 725.4H519.2Z" fill="#000"/>
<path d="M519.2 721.6H521.4V725.2H523.4L520.6 729.8L517.6 725.2H519.2Z" fill="#ffff00"/>
<path d="M521.8 733A3.3 3.6 0 0 1 528.4 733Z" fill="#fff"/>
<rect x="517" y="724" width="1" height="1" fill="#3030c0"/><rect x="527" y="729" width="1" height="1" fill="#3030c0"/>
<rect x="1180" y="722" width="6" height="6" fill="#3030c0"/>
<circle cx="1183" cy="725" r="3.2" fill="#fff"/>
<path d="M1187.3 723.6L1190.8 729.4H1189V733.2H1185.6V729.4H1183.8Z" fill="#000"/>
<path d="M1187.5 724.6L1190.4 729.4H1188.8V733.2H1186.3V729.4H1184.7Z" fill="#ffff00"/>
<rect x="0" y="736" width="1280" height="1" fill="#acacac" shape-rendering="crispEdges"/>
<rect x="0" y="737" width="1280" height="73" fill="#fff" shape-rendering="crispEdges"/>
<rect x="1" y="738" width="1279" height="72" fill="#cdfaf6" shape-rendering="crispEdges"/>
<g shape-rendering="crispEdges">
<rect x="87" y="738" width="1" height="72" fill="#fff"/>
<rect x="88" y="738" width="1" height="72" fill="#787878"/>
<rect x="204" y="738" width="1" height="72" fill="#fff"/>
<rect x="205" y="738" width="1" height="72" fill="#787878"/>
<rect x="322" y="738" width="1" height="72" fill="#fff"/>
<rect x="323" y="738" width="1" height="72" fill="#787878"/>
<rect x="440" y="738" width="1" height="72" fill="#fff"/>
<rect x="441" y="738" width="1" height="72" fill="#787878"/>
<rect x="558" y="738" width="1" height="72" fill="#fff"/>
<rect x="559" y="738" width="1" height="72" fill="#787878"/>
<rect x="676" y="738" width="1" height="72" fill="#fff"/>
<rect x="677" y="738" width="1" height="72" fill="#787878"/>
<rect x="794" y="738" width="1" height="72" fill="#fff"/>
<rect x="795" y="738" width="1" height="72" fill="#787878"/>
<rect x="912" y="738" width="1" height="72" fill="#fff"/>
<rect x="913" y="738" width="1" height="72" fill="#787878"/>
</g>
<text transform="translate(8.3,756) scale(0.885,1)" text-anchor="start" fill="#000" stroke="#000" stroke-width="0.3" font-size="12.5" font-weight="bold">Sensor</text>
<text transform="translate(8.3,772) scale(0.945,1)" text-anchor="start" fill="#000" stroke="#000" stroke-width="0.3" font-size="12.5" font-weight="bold">MinWert</text>
<text transform="translate(8.3,788) scale(0.945,1)" text-anchor="start" fill="#000" stroke="#000" stroke-width="0.3" font-size="12.5" font-weight="bold">MaxWert</text>
<text transform="translate(8.3,804) scale(0.922,1)" text-anchor="start" fill="#000" stroke="#000" stroke-width="0.3" font-size="12.5" font-weight="bold">Durchschnitt</text>
<text transform="translate(95,756) scale(0.975,1)" text-anchor="start" fill="#000" stroke="#000" stroke-width="0.3" font-size="12.5" font-weight="bold">Temp. A.</text>
<text transform="translate(198.3,756) scale(0.945,1)" text-anchor="end" fill="#000" stroke="#000" stroke-width="0.3" font-size="12.5" font-weight="bold">°C</text>
<text transform="translate(101.2,772) scale(0.835,1)" text-anchor="start" fill="#000" stroke="#000" stroke-width="0.3" font-size="12.5">06:45</text>
<text transform="translate(198.3,772) scale(0.835,1)" text-anchor="end" fill="#000" stroke="#000" stroke-width="0.3" font-size="12.5">-6.9</text>
<text transform="translate(101.2,788) scale(0.835,1)" text-anchor="start" fill="#000" stroke="#000" stroke-width="0.3" font-size="12.5">15:50</text>
<text transform="translate(198.3,788) scale(0.835,1)" text-anchor="end" fill="#000" stroke="#000" stroke-width="0.3" font-size="12.5">3.4</text>
<text transform="translate(198.3,804) scale(0.835,1)" text-anchor="end" fill="#000" stroke="#000" stroke-width="0.3" font-size="12.5">-1.15</text>
<text transform="translate(212.7,756) scale(0.97,1)" text-anchor="start" fill="#000" stroke="#000" stroke-width="0.3" font-size="12.5" font-weight="bold">Temp. I.</text>
<text transform="translate(316.0,756) scale(0.945,1)" text-anchor="end" fill="#000" stroke="#000" stroke-width="0.3" font-size="12.5" font-weight="bold">°C</text>
<text transform="translate(218.89999999999998,772) scale(0.835,1)" text-anchor="start" fill="#000" stroke="#000" stroke-width="0.3" font-size="12.5">12:09</text>
<text transform="translate(316.0,772) scale(0.835,1)" text-anchor="end" fill="#000" stroke="#000" stroke-width="0.3" font-size="12.5">23.2</text>
<text transform="translate(218.89999999999998,788) scale(0.835,1)" text-anchor="start" fill="#000" stroke="#000" stroke-width="0.3" font-size="12.5">20:55</text>
<text transform="translate(316.0,788) scale(0.835,1)" text-anchor="end" fill="#000" stroke="#000" stroke-width="0.3" font-size="12.5">28.1</text>
<text transform="translate(316.0,804) scale(0.835,1)" text-anchor="end" fill="#000" stroke="#000" stroke-width="0.3" font-size="12.5">25.03</text>
<text transform="translate(684.5,756) scale(0.922,1)" text-anchor="start" fill="#000" stroke="#000" stroke-width="0.3" font-size="12.5" font-weight="bold">Luftdruck</text>
<text transform="translate(787.8,756) scale(0.945,1)" text-anchor="end" fill="#000" stroke="#000" stroke-width="0.3" font-size="12.5" font-weight="bold">hPa</text>
<text transform="translate(690.7,772) scale(0.835,1)" text-anchor="start" fill="#000" stroke="#000" stroke-width="0.3" font-size="12.5">23:55</text>
<text transform="translate(787.8,772) scale(0.835,1)" text-anchor="end" fill="#000" stroke="#000" stroke-width="0.3" font-size="12.5">1039.0</text>
<text transform="translate(690.7,788) scale(0.835,1)" text-anchor="start" fill="#000" stroke="#000" stroke-width="0.3" font-size="12.5">02:35</text>
<text transform="translate(787.8,788) scale(0.835,1)" text-anchor="end" fill="#000" stroke="#000" stroke-width="0.3" font-size="12.5">1042.5</text>
<text transform="translate(684.5,804) scale(0.89,1)" text-anchor="start" fill="#000" stroke="#000" stroke-width="0.3" font-size="12.5">^1.2hPa/h</text>
<text transform="translate(787.8,804) scale(0.835,1)" text-anchor="end" fill="#000" stroke="#000" stroke-width="0.3" font-size="12.5">1040.9</text>
<text transform="translate(802.6,756) scale(0.97,1)" text-anchor="start" fill="#000" stroke="#000" stroke-width="0.3" font-size="12.5" font-weight="bold">Regen</text>
<text transform="translate(905.9,756) scale(0.945,1)" text-anchor="end" fill="#000" stroke="#000" stroke-width="0.3" font-size="12.5" font-weight="bold">l/m²</text>
<text transform="translate(808.8000000000001,788) scale(0.835,1)" text-anchor="start" fill="#000" stroke="#000" stroke-width="0.3" font-size="12.5">00:00</text>
<text transform="translate(905.9,788) scale(0.835,1)" text-anchor="end" fill="#000" stroke="#000" stroke-width="0.3" font-size="12.5">0.0</text>
<text transform="translate(802.6,804) scale(0.835,1)" text-anchor="start" fill="#000" stroke="#000" stroke-width="0.3" font-size="12.5">Gesamt:</text>
<text transform="translate(905.9,804) scale(0.835,1)" text-anchor="end" fill="#000" stroke="#000" stroke-width="0.3" font-size="12.5">0.0</text>
<text transform="translate(920.5999999999999,756) scale(0.945,1)" text-anchor="start" fill="#000" stroke="#000" stroke-width="0.3" font-size="12.5" font-weight="bold">Wind</text>
<text transform="translate(1021.6999999999999,756) scale(0.99,1)" text-anchor="end" fill="#000" stroke="#000" stroke-width="0.3" font-size="12.5" font-weight="bold">km/h</text>
<text transform="translate(920.5999999999999,772) scale(0.835,1)" text-anchor="start" fill="#000" stroke="#000" stroke-width="0.3" font-size="12.5">Ø 10 min.</text>
<text transform="translate(1021.6999999999999,772) scale(0.835,1)" text-anchor="end" fill="#000" stroke="#000" stroke-width="0.3" font-size="12.5">0.0</text>
<text transform="translate(926.9,788) scale(0.835,1)" text-anchor="start" fill="#000" stroke="#000" stroke-width="0.3" font-size="12.5">07:09</text>
<text transform="translate(1021.6999999999999,788) scale(0.835,1)" text-anchor="end" fill="#000" stroke="#000" stroke-width="0.3" font-size="12.5">N 0.1</text>
<text transform="translate(1021.6999999999999,804) scale(0.835,1)" text-anchor="end" fill="#000" stroke="#000" stroke-width="0.3" font-size="12.5">0.0</text>
</svg></body></html>
